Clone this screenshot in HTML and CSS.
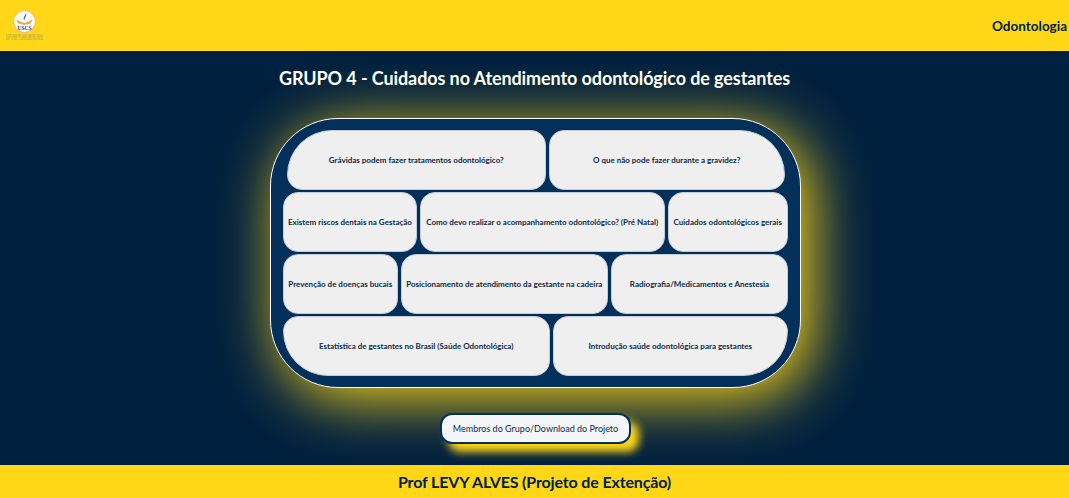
FILE: index.html
```html
<!DOCTYPE html>
<html lang="pt-BR">
<head>
  <meta charset="UTF-8">
  <title>Odontologia</title>
  <meta name="viewport" content="width=device-width, initial-scale=1.0">
  <link rel="stylesheet" href="styles.css">
</head>
<body>
  <header class="topbar">
    <svg class="logo" width="40" height="32" viewBox="0 0 40 32">
      <circle cx="19.500" cy="11.500" r="11" fill="#fff" stroke="#fbbf6a" stroke-width="1.200"/>
      <path d="M21 3c.8 1.800-.2 3.500-1 5 -.5 1-.6 1.800-.2 2.500 -1.500-.8-1.500-2.500-.6-4 .7-1.200 1.500-2.200 1.800-3.500z" fill="#2a6fb5"/>
      <path d="M11.500 9.500c3 2 6 2.800 8 3.500 2-.7 5-1.500 8-3.500 -.5 2.500-1.500 3.800-3 4.500 -2 .1-3.700 .5-5 1 -1.300-.5-3-.9-5-1 -1.500-.7-2.500-2-3-4.500z" fill="#f0a83a"/>
      <text x="19.500" y="19.500" class="logo-mark" text-anchor="middle">USCS</text>
      <text x="1" y="26.500" class="logo-small" textLength="37" lengthAdjust="spacingAndGlyphs">UNIVERSIDADE MUNICIPAL</text>
      <text x="1" y="30" class="logo-small" textLength="37" lengthAdjust="spacingAndGlyphs">DE SÃO CAETANO DO SUL</text>
    </svg>
    <span class="course">Odontologia</span>
  </header>

  <main class="content">
    <h1 class="title">GRUPO 4 - Cuidados no Atendimento odontológico de gestantes</h1>
    <div class="panel">
      <div class="row row1">
        <a class="topic corner-tl">Grávidas podem fazer tratamentos odontológico?</a>
        <a class="topic corner-tr">O que não pode fazer durante a gravidez?</a>
      </div>
      <div class="row row2">
        <a class="topic">Existem riscos dentais na Gestação</a>
        <a class="topic">Como devo realizar o acompanhamento odontológico? (Pré Natal)</a>
        <a class="topic">Cuidados odontológicos gerais</a>
      </div>
      <div class="row row3">
        <a class="topic">Prevenção de doenças bucais</a>
        <a class="topic">Posicionamento de atendimento da gestante na cadeira</a>
        <a class="topic">Radiografia/Medicamentos e Anestesia</a>
      </div>
      <div class="row row4">
        <a class="topic corner-bl">Estatística de gestantes no Brasil (Saúde Odontológica)</a>
        <a class="topic corner-br">Introdução saúde odontológica para gestantes</a>
      </div>
    </div>
    <button class="members">Membros do Grupo/Download do Projeto</button>
  </main>

  <footer class="bottombar">Prof LEVY ALVES (Projeto de Extenção)</footer>
</body>
</html>
```

FILE: styles.css
```css
* {
  box-sizing: border-box;
}
html, body {
  height: 100%;
}
body {
  margin: 0;
  display: flex;
  flex-direction: column;
  font-family: Lato, "Noto Sans", Arial, sans-serif;
  background: #00203f;
  color: #00203f;
  overflow: hidden;
}
.topbar {
  height: 51px;
  flex: none;
  display: flex;
  align-items: center;
  justify-content: space-between;
  padding: 0 2px 0 5px;
  background: #ffd717;
}
.logo {
  display: block;
  margin-top: 1px;
}
.logo-mark {
  font: bold 5.500px "Liberation Serif", serif;
  fill: #1d3f7a;
}
.logo-small {
  font: 3px "Liberation Serif", serif;
  fill: #8f9a60;
}
.course {
  font-size: 13.500px;
  font-weight: 700;
}
.content {
  flex: 1;
  display: flex;
  flex-direction: column;
  align-items: center;
}
.title {
  margin: 13px 0 26px;
  font-size: 18px;
  line-height: 28px;
  font-weight: 700;
  letter-spacing: -0.1px;
  color: #fff;
}
.panel {
  width: 531px;
  height: 270px;
  margin-left: 2px;
  padding: 11px 12px;
  display: flex;
  flex-direction: column;
  gap: 2.500px;
  background: #03305a;
  border: 1px solid #fff;
  border-radius: 68px;
  box-shadow: 10px 10px 60px #ffd717;
}
.row {
  height: 59.500px;
  display: grid;
  gap: 3px;
}
.row1 {
  grid-template-columns: 259.500px 235.500px;
  margin-left: 3.500px;
}
.row2 {
  grid-template-columns: 134px 244.500px 120.500px;
}
.row3 {
  grid-template-columns: 114.500px 207.500px 177px;
}
.row4 {
  grid-template-columns: 266.500px 235.500px;
}
.topic {
  display: flex;
  align-items: center;
  justify-content: center;
  text-align: center;
  white-space: nowrap;
  background: #efefef;
  border: 1px solid #c4ccd4;
  border-radius: 15px;
  font-size: 8px;
  font-weight: 700;
  color: #0b2a4a;
}
.corner-tl {
  border-top-left-radius: 45px;
}
.corner-tr {
  border-top-right-radius: 45px;
}
.corner-bl {
  border-bottom-left-radius: 45px;
}
.corner-br {
  border-bottom-right-radius: 45px;
}
.members {
  width: 191px;
  height: 31px;
  margin-top: 25px;
  margin-left: 2px;
  padding: 0;
  background: #f4f5f7;
  color: #0b2a4a;
  border: 2px solid #03305a;
  border-radius: 12px;
  box-shadow: 8px 8px 8px #ffd717;
  font-family: inherit;
  font-size: 9px;
}
.bottombar {
  height: 33px;
  flex: none;
  display: flex;
  align-items: center;
  justify-content: center;
  background: #ffd717;
  font-size: 16px;
  font-weight: 700;
  letter-spacing: -0.15px;
}
```
